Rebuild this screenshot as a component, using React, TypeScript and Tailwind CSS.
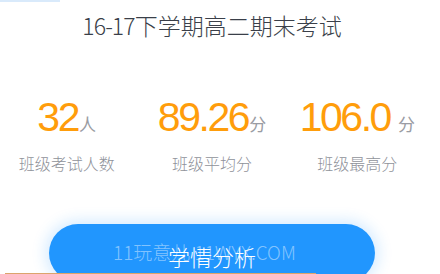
export default function App() {
  const stats = [
    { value: "32", unit: "人", label: "班级考试人数", gap: false },
    { value: "89.26", unit: "分", label: "班级平均分", gap: false },
    { value: "106.0", unit: "分", label: "班级最高分", gap: true },
  ]

  return (
    <div
      className="relative h-[274px] w-[440px] overflow-hidden bg-white"
      style={{ fontFamily: '"Noto Sans CJK SC", "Noto Sans", sans-serif' }}
    >
      <div className="h-[2px] w-[60px] bg-[#d9eafb]" />

      <div className="ml-[-6px] w-[436px]">
        <h1 className="mt-[7px] text-center text-[23px] leading-[32px] font-light text-[#3a3f49]">
          <span className="tracking-[-0.04em]">16-17</span>下学期高二期末考试
        </h1>

        <div className="mt-[54px] grid grid-cols-3">
          {stats.map((s) => (
            <div key={s.label} className="flex flex-col items-center">
              <div className="flex items-baseline">
                <span
                  className="text-[41px] leading-[44px] tracking-[-0.06em] text-[#ff9d0b]"
                  style={{ fontFamily: '"Liberation Sans", sans-serif' }}
                >
                  {s.value}
                </span>
                <span
                  className={`text-[17px] text-[#9a9ca3] ${s.gap ? "ml-[8px]" : "ml-[1px]"}`}
                >
                  {s.unit}
                </span>
              </div>
              <div className="mt-[12px] text-[16px] leading-[24px] font-light text-[#8f929a]">
                {s.label}
              </div>
            </div>
          ))}
        </div>

        <div className="relative mx-auto mt-[49px] flex h-[58px] w-[326px] items-center justify-center rounded-full bg-[#2196fe] shadow-[0_0_14px_4px_rgba(33,150,254,0.18)]">
          <span className="absolute top-[14px] left-[64px] text-[19px] font-light whitespace-nowrap text-white/45">
            11玩意儿 11WYX.COM
          </span>
          <span className="relative mt-[6px] text-[22px] font-light text-white">学情分析</span>
        </div>
      </div>

      <div className="absolute bottom-0 left-[5px] h-[1px] w-[311px] bg-[#dca46c]" />
    </div>
  )
}
